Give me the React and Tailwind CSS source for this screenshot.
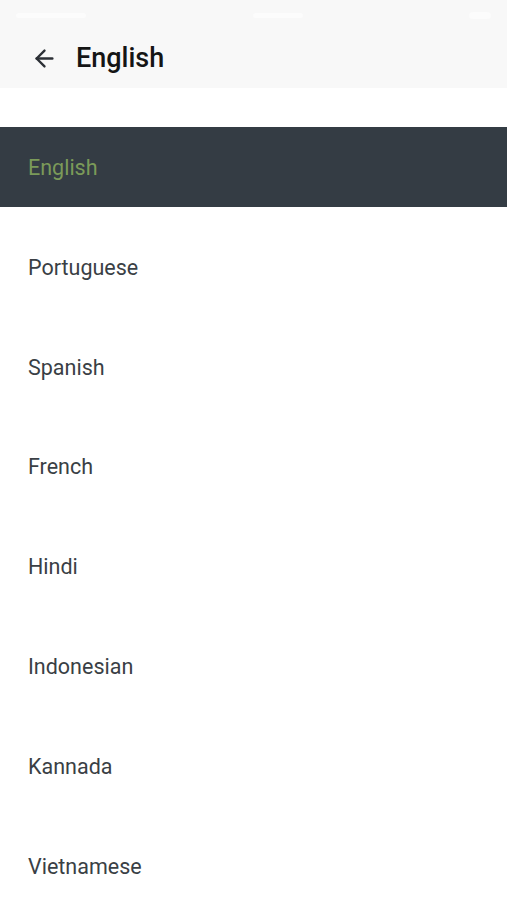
import { ArrowLeft } from "lucide-react";

const languages = [
  "English",
  "Portuguese",
  "Spanish",
  "French",
  "Hindi",
  "Indonesian",
  "Kannada",
  "Vietnamese"
];

export default function App() {
  const selected = "English";

  return (
    <div className="h-[900px] w-[507px] overflow-hidden bg-white font-['Roboto',sans-serif]">
      <header className="bg-[#f8f8f8]">
        <div className="flex h-[30px] items-center justify-between px-4">
          <span className="h-[5px] w-[70px] rounded bg-white/50" />
          <span className="h-[5px] w-[50px] rounded bg-white/50" />
          <span className="h-[7px] w-[22px] rounded bg-white/50" />
        </div>
        <div className="flex h-[58px] items-center gap-[18px] pb-[2px] pl-[31px]">
          <ArrowLeft className="h-[27px] w-[27px] text-[#2c3036]" strokeWidth={2.1} />
          <h1 className="text-[27px] font-medium leading-none text-[#151515]">English</h1>
        </div>
      </header>

      <ul className="mt-[29px]">
        {languages.map((lang) =>
          lang === selected ? (
            <li key={lang} className="flex h-[100px] items-center">
              <div className="flex h-[80px] w-full items-center bg-[#343c44] pt-[2px] pl-[28px] text-[21.5px] text-[#7b9a59]">
                {lang}
              </div>
            </li>
          ) : (
            <li
              key={lang}
              className="flex h-[99.8px] items-center pt-[2px] pl-[28px] text-[21.5px] text-[#3a3f45]"
            >
              {lang}
            </li>
          )
        )}
      </ul>
    </div>
  );
}
